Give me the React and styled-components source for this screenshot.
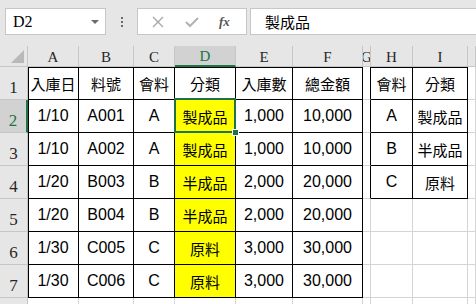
import React from 'react';
import styled, { createGlobalStyle, css } from 'styled-components';

const GlobalStyle = createGlobalStyle`
  html, body {
    margin: 0;
    padding: 0;
    background: #ffffff;
    overflow: hidden;
  }
`;

const Window = styled.div`
  width: 476px;
  height: 304px;
  overflow: hidden;
  background: #e6e6e6;
  font-family: "Liberation Sans", "Noto Sans CJK TC", sans-serif;
`;

const Toolbar = styled.div`
  display: flex;
  align-items: center;
  height: 46px;
  padding: 8px 0 11px 5px;
  box-sizing: border-box;
`;

const NameBox = styled.div`
  display: flex;
  align-items: center;
  justify-content: space-between;
  width: 101px;
  height: 27px;
  box-sizing: border-box;
  padding: 0 6px 0 7px;
  background: #ffffff;
  border: 1px solid #c6c6c6;
  font-family: "Liberation Serif", serif;
  font-size: 16px;
  color: #000;
`;

const Caret = styled.span`
  width: 0;
  height: 0;
  border-left: 4px solid transparent;
  border-right: 4px solid transparent;
  border-top: 4px solid #6a6a6a;
`;

const Grip = styled.div`
  width: 31px;
  display: flex;
  flex-direction: column;
  align-items: center;
  gap: 2px;

  span {
    width: 2px;
    height: 2px;
    background: #6a6a6a;
  }
`;

const ActionBox = styled.div`
  display: flex;
  align-items: center;
  justify-content: space-around;
  width: 110px;
  height: 27px;
  box-sizing: border-box;
  padding: 0 6px 0 4px;
  background: #ffffff;
  border: 1px solid #c6c6c6;
`;

const Fx = styled.span`
  font-family: "Liberation Serif", serif;
  font-style: italic;
  font-weight: bold;
  font-size: 13px;
  color: #555555;
`;

const FormulaInput = styled.div`
  flex: 1;
  margin-left: 3px;
  height: 27px;
  box-sizing: border-box;
  display: flex;
  align-items: center;
  padding-left: 14px;
  background: #ffffff;
  border: 1px solid #c6c6c6;
  border-right: none;
  font-size: 15px;
  color: #000;
`;

const Sheet = styled.div`
  display: grid;
  grid-template-columns: 28px 51px 55px 41px 61px 57px 70px 8px 42px 55px 1fr;
  grid-template-rows: 21px repeat(8, 33px);
  background: #ffffff;
`;

const Corner = styled.div`
  background: #e6e6e6;
  border-right: 1px solid #c6c6c6;
  border-bottom: 1px solid #c6c6c6;
  box-sizing: border-box;
  position: relative;

  &::after {
    content: '';
    position: absolute;
    right: 3px;
    bottom: 3px;
    border-left: 13px solid transparent;
    border-bottom: 13px solid #b9b9b9;
  }
`;

const ColHead = styled.div`
  display: flex;
  align-items: center;
  justify-content: center;
  box-sizing: border-box;
  overflow: hidden;
  background: ${p => (p.$active ? '#d2d2d2' : '#e6e6e6')};
  border-right: 1px solid #c6c6c6;
  border-bottom: ${p => (p.$active ? '2px solid #217346' : '1px solid #c6c6c6')};
  color: ${p => (p.$active ? '#217346' : '#262626')};
  font-family: "Liberation Serif", serif;
  font-size: 15px;
  padding-top: 2px;
`;

const RowHead = styled.div`
  display: flex;
  align-items: flex-end;
  justify-content: center;
  box-sizing: border-box;
  padding-bottom: 1px;
  background: ${p => (p.$active ? '#d2d2d2' : '#e6e6e6')};
  border-right: ${p => (p.$active ? '2px solid #217346' : '1px solid #c6c6c6')};
  border-bottom: 1px solid #c6c6c6;
  color: ${p => (p.$active ? '#217346' : '#262626')};
  font-family: "Liberation Serif", serif;
  font-size: 17px;
`;

const Cell = styled.div`
  position: relative;
  display: flex;
  align-items: center;
  justify-content: center;
  box-sizing: border-box;
  white-space: nowrap;
  background: ${p => (p.$fill ? '#ffff00' : '#ffffff')};
  border-right: 1px solid ${p => (p.$right ? '#000000' : '#d4d4d4')};
  border-bottom: 1px solid ${p => (p.$bottom ? '#000000' : '#d4d4d4')};
  box-shadow: ${p => [p.$top && 'inset 0 1px 0 #000', p.$left && 'inset 1px 0 0 #000'].filter(Boolean).join(', ') || 'none'};
  font-size: ${p => (p.$cjk ? '15px' : '16px')};
  color: #000;

  ${p => p.$selected && css`
    z-index: 3;
    &::before {
      content: '';
      position: absolute;
      left: -1px;
      top: -2px;
      right: -1px;
      bottom: -1px;
      border: 2px solid #217346;
      pointer-events: none;
    }
    &::after {
      content: '';
      position: absolute;
      right: -4px;
      bottom: -4px;
      width: 5px;
      height: 5px;
      background: #217346;
      border: 1px solid #ffffff;
    }
  `}
`;

const columns = ['A', 'B', 'C', 'D', 'E', 'F', 'G', 'H', 'I', ''];

const rows = [
  ['入庫日', '料號', '會料', '分類', '入庫數', '總金額', '', '會料', '分類'],
  ['1/10', 'A001', 'A', '製成品', '1,000', '10,000', '', 'A', '製成品'],
  ['1/10', 'A002', 'A', '製成品', '1,000', '10,000', '', 'B', '半成品'],
  ['1/20', 'B003', 'B', '半成品', '2,000', '20,000', '', 'C', '原料'],
  ['1/20', 'B004', 'B', '半成品', '2,000', '20,000'],
  ['1/30', 'C005', 'C', '原料', '3,000', '30,000'],
  ['1/30', 'C006', 'C', '原料', '3,000', '30,000'],
  [],
];

const isCjk = text => /[\u3400-\u9fff]/.test(text);

const App = () => {
  return (
    <Window>
      <GlobalStyle />
      <Toolbar>
        <NameBox>
          D2
          <Caret />
        </NameBox>
        <Grip>
          <span />
          <span />
          <span />
        </Grip>
        <ActionBox>
          <svg width="12" height="12" viewBox="0 0 12 12">
            <path d="M1 1 L11 11 M11 1 L1 11" stroke="#a6a6a6" strokeWidth="1.3" />
          </svg>
          <svg width="14" height="12" viewBox="0 0 14 12">
            <path d="M1 6 L5 10 L13 2" stroke="#b3b3b3" strokeWidth="2" fill="none" />
          </svg>
          <Fx>fx</Fx>
        </ActionBox>
        <FormulaInput>製成品</FormulaInput>
      </Toolbar>

      <Sheet>
        <Corner />
        {columns.map((c, i) => (
          <ColHead key={i} $active={c === 'D'}>{c}</ColHead>
        ))}
        {rows.map((row, ri) => {
          const r = ri + 1;
          return (
            <React.Fragment key={r}>
              <RowHead $active={r === 2}>{r <= 7 ? r : ''}</RowHead>
              {columns.map((_, c) => {
                const inMain = r <= 7 && c <= 5;
                const inSide = r <= 4 && (c === 7 || c === 8);
                const text = row[c] || '';
                return (
                  <Cell
                    key={c}
                    $right={inMain || inSide || (c === 6 && r <= 4)}
                    $bottom={inMain || inSide}
                    $top={r === 1 && (c <= 5 || c === 7 || c === 8)}
                    $left={c === 0 && r <= 7}
                    $fill={c === 3 && r >= 2 && r <= 7}
                    $selected={c === 3 && r === 2}
                    $cjk={isCjk(text)}
                  >
                    {text}
                  </Cell>
                );
              })}
            </React.Fragment>
          );
        })}
      </Sheet>
    </Window>
  );
};

export default App;
